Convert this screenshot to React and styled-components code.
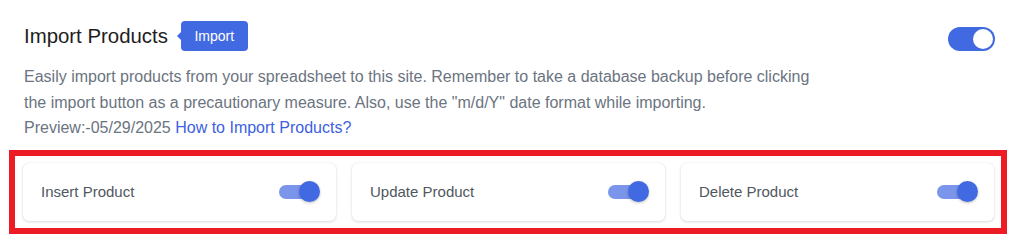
import React, { useState } from 'react';
import styled, { createGlobalStyle } from 'styled-components';

const GlobalStyle = createGlobalStyle`
  body {
    margin: 0;
    background: #ffffff;
    font-family: "Liberation Sans", Arial, sans-serif;
  }
`;

const Section = styled.section`
  padding: 21px 29px 12px 24px;
`;

const Header = styled.div`
  display: flex;
  align-items: center;
  justify-content: space-between;
  height: 30px;
`;

const TitleGroup = styled.div`
  display: flex;
  align-items: center;
  gap: 13px;
`;

const Title = styled.h2`
  margin: 0;
  font-size: 20.4px;
  font-weight: 400;
  color: #1e1e1e;
  line-height: 30px;
`;

const Badge = styled.span`
  position: relative;
  display: inline-flex;
  align-items: center;
  height: 30px;
  padding: 0 13.5px;
  border-radius: 4px;
  background: #4169e1;
  color: #ffffff;
  font-size: 14px;

  &::before {
    content: '';
    position: absolute;
    left: -4px;
    top: 50%;
    transform: translateY(-50%);
    border-top: 5px solid transparent;
    border-bottom: 5px solid transparent;
    border-right: 5px solid #4169e1;
  }
`;

const BigTrack = styled.button`
  position: relative;
  width: 47px;
  height: 24px;
  margin-top: 6px;
  padding: 0;
  border: none;
  border-radius: 12px;
  background: ${(p) => (p.$on ? '#4169e1' : '#c3c4c7')};
  cursor: pointer;

  &::after {
    content: '';
    position: absolute;
    top: 2px;
    left: ${(p) => (p.$on ? '25px' : '3px')};
    width: 20px;
    height: 20px;
    border-radius: 50%;
    background: #ffffff;
  }
`;

const Description = styled.p`
  margin: 13px 0 0;
  font-size: 16px;
  line-height: 25.5px;
  color: #6b7480;
`;

const Link = styled.a`
  color: #3d5fdf;
  text-decoration: none;
`;

const Frame = styled.div`
  margin: 9px -12px 0 -15px;
  border: 6px solid #ed1c24;
  padding: 7px 7px 7px 8px;
`;

const Grid = styled.div`
  display: grid;
  grid-template-columns: repeat(3, 1fr);
  gap: 16px;
`;

const Card = styled.div`
  display: flex;
  align-items: center;
  justify-content: space-between;
  height: 58px;
  box-sizing: border-box;
  padding: 0 17px 0 18px;
  border-radius: 6px;
  background: #ffffff;
  box-shadow: 0 1px 3px rgba(30, 40, 70, 0.16), 0 0 1px rgba(30, 40, 70, 0.12);
`;

const CardLabel = styled.span`
  font-size: 15px;
  color: #50575e;
`;

const SmallSwitch = styled.button`
  position: relative;
  width: 40px;
  height: 21px;
  padding: 0;
  border: none;
  background: transparent;
  cursor: pointer;
`;

const SmallTrack = styled.span`
  position: absolute;
  left: 0;
  top: 3.5px;
  width: 34px;
  height: 14px;
  border-radius: 7px;
  background: ${(p) => (p.$on ? '#7b95ea' : '#c3c4c7')};
`;

const Knob = styled.span`
  position: absolute;
  top: 0;
  left: ${(p) => (p.$on ? '20px' : '0')};
  width: 21px;
  height: 21px;
  border-radius: 50%;
  background: ${(p) => (p.$on ? '#4169e1' : '#f6f7f7')};
  box-shadow: 0 1px 3px rgba(0, 0, 0, 0.25);
`;

const options = ['Insert Product', 'Update Product', 'Delete Product'];

export default function App() {
  const [enabled, setEnabled] = useState(true);
  const [flags, setFlags] = useState([true, true, true]);

  const toggle = (i) => setFlags(flags.map((f, j) => (j === i ? !f : f)));

  return (
    <>
      <GlobalStyle />
      <Section>
        <Header>
          <TitleGroup>
            <Title>Import Products</Title>
            <Badge>Import</Badge>
          </TitleGroup>
          <BigTrack $on={enabled} onClick={() => setEnabled(!enabled)} aria-label="Enable import" />
        </Header>
        <Description>
          Easily import products from your spreadsheet to this site. Remember to take a database backup before clicking
          <br />
          the import button as a precautionary measure. Also, use the "m/d/Y" date format while importing.
          <br />
          Preview:-05/29/2025 <Link href="#">How to Import Products?</Link>
        </Description>
        <Frame>
          <Grid>
            {options.map((label, i) => (
              <Card key={label}>
                <CardLabel>{label}</CardLabel>
                <SmallSwitch onClick={() => toggle(i)} aria-label={label}>
                  <SmallTrack $on={flags[i]} />
                  <Knob $on={flags[i]} />
                </SmallSwitch>
              </Card>
            ))}
          </Grid>
        </Frame>
      </Section>
    </>
  );
}
